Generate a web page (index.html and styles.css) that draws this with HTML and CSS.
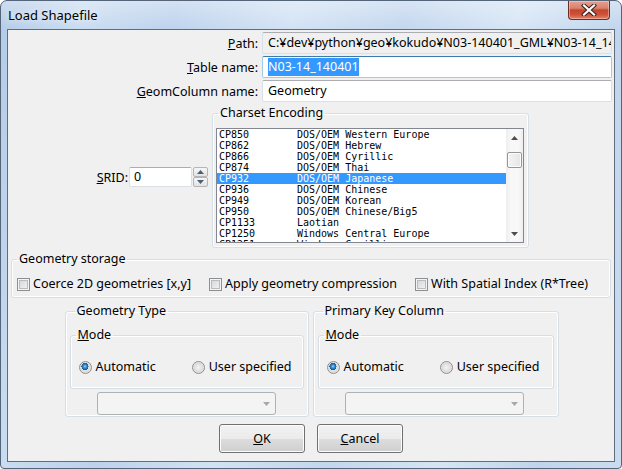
FILE: index.html
```html
<!DOCTYPE html>
<html>
<head>
<meta charset="utf-8">
<link rel="stylesheet" href="styles.css">
</head>
<body>
<div class="window">
  <div class="titlebar">
    <span class="title">Load Shapefile</span>
    <div class="close">
      <svg width="16" height="12" viewBox="0 0 16 12">
        <path d="M3 1.5 L13 10.5 M13 1.5 L3 10.5" stroke="#3a2020" stroke-width="4.2" stroke-linecap="square"/>
        <path d="M3 1.5 L13 10.5 M13 1.5 L3 10.5" stroke="#ffffff" stroke-width="2.2" stroke-linecap="square"/>
      </svg>
    </div>
  </div>
  <div class="client">
    <div class="form">
      <span class="label"><u>P</u>ath:</span>
      <div class="field readonly">C:¥dev¥python¥geo¥kokudo¥N03-140401_GML¥N03-14_140401.shp</div>
      <span class="label"><u>T</u>able name:</span>
      <div class="field focused"><span class="sel">N03-14_140401</span></div>
      <span class="label"><u>G</u>eomColumn name:</span>
      <div class="field">Geometry</div>
    </div>

    <div class="middle">
      <div class="srid">
        <span class="srid-label"><u>S</u>RID:</span>
        <div class="srid-input">0</div>
        <div class="spinner">
          <div class="spin up"><svg width="7" height="4" viewBox="0 0 7 4"><path d="M0 4 L3.5 0 L7 4 Z" fill="#4a5f7e"/></svg></div>
          <div class="spin down"><svg width="7" height="4" viewBox="0 0 7 4"><path d="M0 0 L3.5 4 L7 0 Z" fill="#4a5f7e"/></svg></div>
        </div>
      </div>
      <fieldset class="group charset">
        <legend>Charset Encoding</legend>
        <div class="listbox">
          <div class="rows">
            <div class="row"><span class="code">CP850</span>DOS/OEM Western Europe</div>
            <div class="row"><span class="code">CP862</span>DOS/OEM Hebrew</div>
            <div class="row"><span class="code">CP866</span>DOS/OEM Cyrillic</div>
            <div class="row"><span class="code">CP874</span>DOS/OEM Thai</div>
            <div class="row selected"><span class="code">CP932</span>DOS/OEM Japanese</div>
            <div class="row"><span class="code">CP936</span>DOS/OEM Chinese</div>
            <div class="row"><span class="code">CP949</span>DOS/OEM Korean</div>
            <div class="row"><span class="code">CP950</span>DOS/OEM Chinese/Big5</div>
            <div class="row"><span class="code">CP1133</span>Laotian</div>
            <div class="row"><span class="code">CP1250</span>Windows Central Europe</div>
            <div class="row"><span class="code">CP1251</span>Windows Cyrillic</div>
          </div>
          <div class="scrollbar">
            <div class="arrow"><svg width="7" height="4" viewBox="0 0 7 4"><path d="M0 4 L3.5 0 L7 4 Z" fill="#4d4d4d"/></svg></div>
            <div class="track">
              <div class="thumb"></div>
            </div>
            <div class="arrow"><svg width="7" height="4" viewBox="0 0 7 4"><path d="M0 0 L3.5 4 L7 0 Z" fill="#4d4d4d"/></svg></div>
          </div>
        </div>
      </fieldset>
    </div>

    <fieldset class="group storage">
      <legend>Geometry storage</legend>
      <div class="checks">
        <label class="check"><span class="cb"></span>Coerce 2D geometries [x,y]</label>
        <label class="check"><span class="cb"></span>Apply geometry compression</label>
        <label class="check"><span class="cb"></span>With Spatial Index (R*Tree)</label>
      </div>
    </fieldset>

    <div class="pair">
      <fieldset class="group outer gtype">
        <legend>Geometry Type</legend>
        <fieldset class="group mode">
          <legend><u>M</u>ode</legend>
          <div class="radios">
            <label class="radio"><span class="rb checked"></span>Automatic</label>
            <label class="radio"><span class="rb"></span>User specified</label>
          </div>
        </fieldset>
        <div class="combo"><svg width="7" height="4" viewBox="0 0 7 4"><path d="M0 0 L3.5 4 L7 0 Z" fill="#a8a8a8"/></svg></div>
      </fieldset>
      <fieldset class="group outer pkey">
        <legend>Primary Key Column</legend>
        <fieldset class="group mode">
          <legend><u>M</u>ode</legend>
          <div class="radios">
            <label class="radio"><span class="rb checked"></span>Automatic</label>
            <label class="radio"><span class="rb"></span>User specified</label>
          </div>
        </fieldset>
        <div class="combo"><svg width="7" height="4" viewBox="0 0 7 4"><path d="M0 0 L3.5 4 L7 0 Z" fill="#a8a8a8"/></svg></div>
      </fieldset>
    </div>

    <div class="buttons">
      <div class="btn"><u>O</u>K</div>
      <div class="btn"><u>C</u>ancel</div>
    </div>
  </div>
</div>
</body>
</html>
```

FILE: styles.css
```css
* { box-sizing: border-box; }
html, body { margin: 0; padding: 0; }
body {
  width: 622px;
  height: 469px;
  overflow: hidden;
  font-family: "Noto Sans", "Open Sans", sans-serif;
  font-size: 12.5px;
  color: #000;
  background: #ffffff;
}
u { text-decoration: underline; text-underline-offset: 1px; }

.window {
  width: 622px;
  height: 469px;
  border: 1px solid #54657a;
  border-radius: 7px 7px 4px 4px;
  background:
    linear-gradient(to bottom, rgba(255,255,255,0.35), rgba(255,255,255,0) 30px),
    linear-gradient(100deg, #b3cbe6 0%, #c9dcf1 12%, #bcd2ec 25%, #d2e2f4 42%, #c2d6ee 58%, #d6e5f5 74%, #c0d5ed 88%, #cadcf0 100%);
  display: flex;
  flex-direction: column;
}

.titlebar {
  height: 28px;
  display: flex;
  justify-content: space-between;
  align-items: flex-start;
  padding-left: 7px;
}
.title {
  line-height: 28px;
  font-family: "Noto Sans", sans-serif;
  font-size: 13px;
  color: #000;
  text-shadow: 0 0 6px rgba(255,255,255,0.9);
}
.close {
  margin-right: 11px;
  width: 42px;
  height: 19px;
  border: 1px solid #6c2d25;
  border-top: none;
  border-radius: 0 0 4px 4px;
  background: linear-gradient(to bottom, #e6a08f 0%, #d9826d 40%, #c4452d 50%, #cd5238 75%, #e0856a 100%);
  box-shadow: inset 0 0 0 1px rgba(255,220,210,0.45);
  display: flex;
  align-items: center;
  justify-content: center;
}

.client {
  margin: 0 6px;
  height: 433px;
  border: 1px solid #606d7c;
  background: #f0f0f0;
}

/* top form */
.form {
  display: grid;
  grid-template-columns: 250px 350px;
  grid-auto-rows: 22px;
  column-gap: 4px;
  row-gap: 2px;
  margin-top: 2px;
  align-items: center;
}
.label { text-align: right; }
.field {
  height: 22px;
  border: 1px solid #dbdfe6;
  border-top-color: #abadb3;
  border-radius: 2px;
  background: #fff;
  padding: 0 5px;
  line-height: 20px;
  white-space: nowrap;
  overflow: hidden;
}
.field.readonly { background: #f0f0f0; }
.field.focused { border-color: #a4c9e3; border-top-color: #3d7bad; }
.sel {
  display: inline-block;
  background: #3399ff;
  color: #fff;
  line-height: 18px;
}

/* middle */
.middle {
  display: flex;
  align-items: center;
  margin-top: 4px;
}
.srid {
  width: 200px;
  display: flex;
  justify-content: flex-end;
  align-items: center;
}
.srid-label { margin-right: 1px; }
.srid-input {
  width: 63px;
  height: 20px;
  border: 1px solid #dbdfe6;
  border-top-color: #abadb3;
  border-radius: 2px;
  background: #fff;
  padding: 0 4px;
  line-height: 18px;
}
.spinner {
  margin-left: 1px;
  width: 15px;
  height: 20px;
  display: flex;
  flex-direction: column;
}
.spin {
  flex: 1;
  border: 1px solid #b5b5b5;
  border-radius: 2px;
  background: linear-gradient(to bottom, #f6f6f6, #e3e3e3);
  display: flex;
  align-items: center;
  justify-content: center;
}

.group {
  margin: 0;
  min-width: 0;
  padding: 0;
  border: 1px solid #d5dfe5;
  border-radius: 3px;
  box-shadow: inset 0 0 0 1px #ffffff;
}
.group legend {
  padding: 0 2px;
  margin-left: 5px;
  line-height: 14px;
  color: #000;
}

.charset {
  margin-left: 4px;
  width: 317px;
  padding: 8px 4px 4px 3px;
}
.charset legend { margin-left: 2px; }
.listbox {
  width: 308px;
  height: 115px;
  border: 1px solid #828790;
  background: #fff;
  display: flex;
}
.rows {
  flex: 1;
  overflow: hidden;
  font-family: "DejaVu Sans Mono", "Liberation Mono", monospace;
  font-size: 10px;
  line-height: 11px;
}
.row {
  height: 11px;
  padding-left: 2px;
  white-space: nowrap;
  color: #000;
}
.row.selected { background: #3399ff; color: #fff; }
.code { display: inline-block; width: 78px; }
.scrollbar {
  width: 17px;
  display: flex;
  flex-direction: column;
  background: linear-gradient(to right, #eeeeee, #f8f8f8 30%, #f8f8f8 70%, #eeeeee);
}
.arrow {
  height: 17px;
  display: flex;
  align-items: center;
  justify-content: center;
}
.track { flex: 1; padding-top: 6px; }
.thumb {
  margin: 0 1px;
  height: 16px;
  border: 1px solid #979797;
  border-radius: 2px;
  background: linear-gradient(to right, #f4f4f4, #e6e6e6);
  box-shadow: inset 0 0 0 1px #fbfbfb;
}

/* storage */
.storage {
  margin: 4px 3px 0 3px;
  padding: 10px 0 5px 0;
}
.checks {
  display: flex;
  gap: 18px;
  padding-left: 5px;
  line-height: 16px;
}
.check { display: flex; align-items: center; }
.cb {
  width: 13px;
  height: 13px;
  margin-right: 3px;
  border: 1px solid #8f8f8f;
  background: linear-gradient(135deg, #cfd2d6, #f7f7f7);
  box-shadow: inset 0 0 0 1px #f4f4f4, inset 0 0 0 2px #b8bcc1;
}

/* pair */
.pair {
  display: flex;
  justify-content: center;
  gap: 4px;
  margin-top: 6px;
  padding-left: 1px;
}
.outer { padding: 10px 4px 1px 4px; }
.gtype { width: 244px; }
.pkey { width: 246px; }
.mode { padding: 17px 0 13px 0; }
.mode legend { margin-left: 5px; }
.radios {
  display: flex;
  gap: 36px;
  padding-left: 8px;
  line-height: 16px;
}
.radio { display: flex; align-items: center; }
.rb {
  width: 13px;
  height: 13px;
  margin-right: 4px;
  border-radius: 50%;
  border: 1px solid #8f8f8f;
  background: radial-gradient(circle at 50% 50%, #f4f4f4 0, #dcdcdc 55%, #eeeeee 100%);
}
.rb.checked {
  background:
    radial-gradient(circle at 45% 40%, #a6dcff 0, #3d8ed0 1.5px, #135a96 3.5px, rgba(0,0,0,0) 3.6px),
    radial-gradient(circle at 50% 50%, #f4f4f4 0, #dcdcdc 55%, #eeeeee 100%);
}
.combo {
  margin: 3px 0 0 27px;
  width: 179px;
  height: 23px;
  border: 1px solid #adb2b5;
  border-radius: 3px;
  background: #f4f4f4;
  display: flex;
  align-items: center;
  justify-content: flex-end;
  padding-right: 5px;
}

/* buttons */
.buttons {
  display: flex;
  justify-content: center;
  gap: 12px;
  margin-top: 7px;
}
.btn {
  width: 86px;
  height: 29px;
  border: 1px solid #707070;
  border-radius: 3px;
  background: linear-gradient(to bottom, #f2f2f2 0%, #ebebeb 50%, #dddddd 50%, #cfcfcf 100%);
  box-shadow: inset 0 0 0 1px #fcfcfc;
  display: flex;
  align-items: center;
  justify-content: center;
}
```
